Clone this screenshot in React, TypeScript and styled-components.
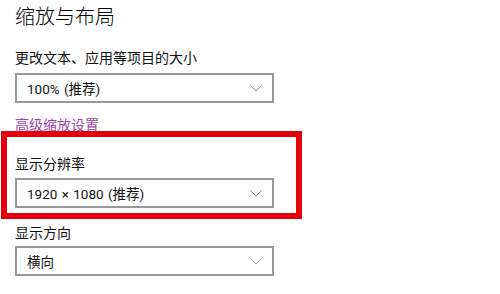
import React from 'react';
import styled, { createGlobalStyle } from 'styled-components';

const GlobalStyle = createGlobalStyle`
  html, body {
    margin: 0;
    padding: 0;
    background: #fff;
  }
  body {
    font-family: "Noto Sans", "Noto Sans CJK SC", sans-serif;
    color: #000;
  }
`;

const Page = styled.div`
  position: relative;
  width: 500px;
  height: 294px;
  overflow: hidden;
  padding: 2px 0 0 15px;
  box-sizing: border-box;
  display: flex;
  flex-direction: column;
`;

const Title = styled.div`
  font-family: "Noto Sans CJK SC", sans-serif;
  font-size: 20px;
  line-height: 28px;
  font-weight: 300;
  color: #000;
  margin-bottom: 17px;
`;

const Label = styled.div<{ $gap: number }>`
  font-family: "Noto Sans CJK SC", sans-serif;
  font-size: 14px;
  line-height: 20px;
  color: #111;
  margin-bottom: ${(p) => p.$gap}px;
`;

const Select = styled.div<{ $after: number }>`
  width: 259px;
  height: 30px;
  box-sizing: border-box;
  border: 2px solid #999;
  background: #fff;
  display: flex;
  align-items: center;
  justify-content: space-between;
  padding: 0 10px 0 10px;
  font-family: Roboto, "Noto Sans CJK SC", sans-serif;
  font-size: 13.5px;
  word-spacing: 1px;
  color: #111;
  margin-bottom: ${(p) => p.$after}px;
`;

const Link = styled.div`
  font-family: "Noto Sans CJK SC", sans-serif;
  font-size: 14px;
  line-height: 20px;
  color: #9b3fac;
  margin-bottom: 19px;
`;

const Highlight = styled.div`
  position: absolute;
  left: 1px;
  top: 131px;
  width: 301px;
  height: 88px;
  box-sizing: border-box;
  border: 6px solid #e3000b;
  pointer-events: none;
`;

const Chevron = () => (
  <svg width="12" height="7" viewBox="0 0 12 7">
    <polyline points="0.5,0.5 6,6 11.5,0.5" fill="none" stroke="#999" strokeWidth="1" />
  </svg>
);

const Dropdown: React.FC<{ value: string; after: number }> = ({ value, after }) => (
  <Select $after={after}>
    <span>{value}</span>
    <Chevron />
  </Select>
);

export default function App() {
  return (
    <>
      <GlobalStyle />
      <Page>
        <Title>缩放与布局</Title>
        <Label $gap={6}>更改文本、应用等项目的大小</Label>
        <Dropdown value="100% (推荐)" after={11} />
        <Link>高级缩放设置</Link>
        <Label $gap={5}>显示分辨率</Label>
        <Dropdown value="1920 × 1080 (推荐)" after={14} />
        <Label $gap={4}>显示方向</Label>
        <Dropdown value="横向" after={0} />
        <Highlight />
      </Page>
    </>
  );
}
